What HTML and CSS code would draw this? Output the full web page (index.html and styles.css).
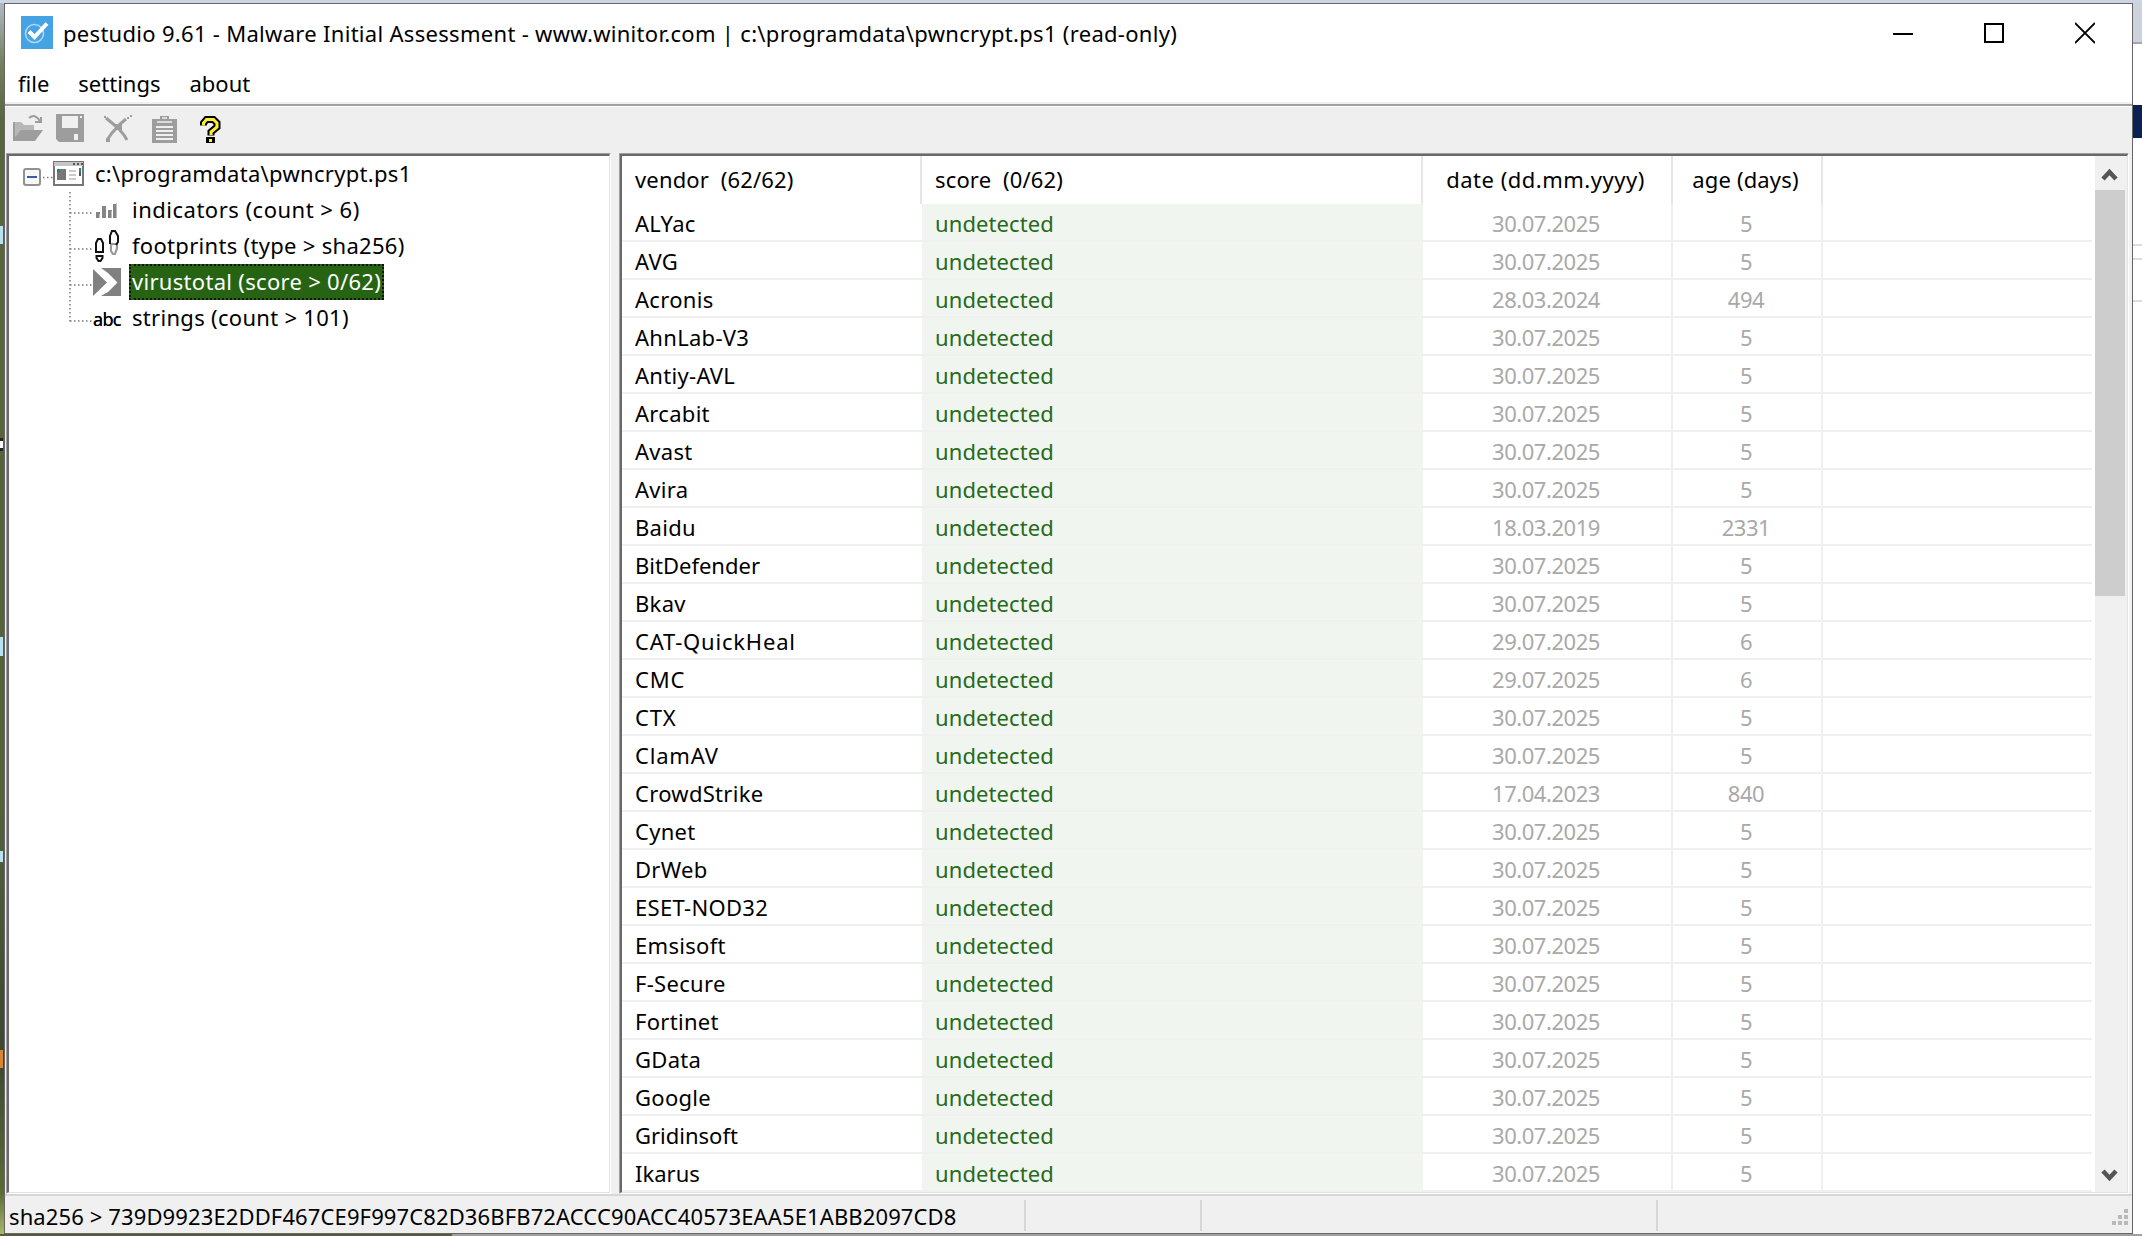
FILE: index.html
```
<!DOCTYPE html>
<html lang="en">
<head>
<meta charset="utf-8">
<title>pestudio</title>
<link rel="stylesheet" href="styles.css">
</head>
<body>
<div class="desk-left"><i class="m1"></i><i class="m2"></i><i class="m3"></i><i class="m4"></i><i class="m5"></i></div>
<main class="window">
  <header class="titlebar">
    <svg class="app-icon" width="32" height="33" viewBox="0 0 32 33"><path fill="#45a3e3" d="M0 0h32v33H0z"/><circle cx="13.500" cy="17.500" r="9" fill="none" stroke="#a9d6f3" stroke-width="1.600"/><path d="M8 15.500l5.500 5.500L26 7.500" fill="none" stroke="#fff" stroke-width="4"/></svg>
    <h1>pestudio 9.61 - Malware Initial Assessment - www.winitor.com | c:\programdata\pwncrypt.ps1 (read-only)</h1>
    <div class="controls">
      <svg width="20" height="22" viewBox="0 0 20 22"><path d="M0 12h20" stroke="#000" stroke-width="2"/></svg>
      <svg width="20" height="22" viewBox="0 0 20 22"><path d="M1 2h18v18H1z" fill="none" stroke="#000" stroke-width="2"/></svg>
      <svg width="20" height="22" viewBox="0 0 20 22"><path d="M0 1l20 20M20 1L0 21" stroke="#000" stroke-width="1.800"/></svg>
    </div>
  </header>
  <nav class="menu"><span>file</span><span>settings</span><span>about</span></nav>
  <div class="toolbar">
    <svg width="31" height="28" viewBox="0 0 31 28"><path d="M1 26V8h8l3 3h10v5H12L4 26z" fill="#b7b7b7"/><path d="M1 26L9 16h22l-8 11H1z" fill="#9d9d9d"/><path d="M1 8h2v18H1z" fill="#9d9d9d"/><path d="M17 4q6-5 11 3M29 3v5h-6" fill="none" stroke="#9d9d9d" stroke-width="2"/></svg>
    <svg width="28" height="28" viewBox="0 0 28 28"><path d="M0 0h28v28H3l-3-3z" fill="#9d9d9d"/><path d="M6 2h16v12H6zM18 20h4v6h-4z" fill="#f0f0f0"/><path d="M24 2h2v2h-2z" fill="#f0f0f0"/></svg>
    <svg width="28" height="28" viewBox="0 0 28 28"><path d="M2 3l6 5 7 6 5 6 3 5M22 4l-6 5-8 9-5 7" fill="none" stroke="#9d9d9d" stroke-width="3"/><path d="M2 23h4v4H2zM0 1h2v2H0zM23 2h2v2h-2zM26 0h2v2h-2zM11 9h7v6h-7z" fill="#9d9d9d"/></svg>
    <svg width="25" height="28" viewBox="0 0 25 28"><path d="M0 4h25v24H0z" fill="#9d9d9d"/><path d="M8 1h9v6H8z" fill="#9d9d9d"/><path d="M10 3h5M5 7h15" stroke="#f0f0f0" stroke-width="1.500"/><path d="M4 11h17v2H4zM4 15h17v2H4zM4 19h17v2H4zM4 23h17v2H4z" fill="#f0f0f0"/></svg>
    <svg width="21" height="28" viewBox="0 0 21 28"><path d="M3.500 9.500V7l3-3.500h7L17 7v4l-6 5v3.500" fill="none" stroke="#000" stroke-width="7"/><path d="M6 21h9v6H6z" fill="#000"/><path d="M3.500 9.500V7l3-3.500h7L17 7v4l-6 5v3" fill="none" stroke="#ffee2e" stroke-width="3"/><path d="M9 23h3v3H9z" fill="#ffee2e"/></svg>
  </div>
  <div class="panes">
    <section class="pane"><div class="pane-inner tree">
      <div class="node root">
        <svg width="76" height="36" viewBox="0 0 76 36"><rect x="15" y="13" width="16" height="16" rx="2" fill="#f7f7f7" stroke="#919191" stroke-width="2"/><path d="M18 21h10" stroke="#3c58a8" stroke-width="2"/><path d="M34 21.500h11" stroke="#777" stroke-width="1.500" stroke-dasharray="1.500 2.500"/><path d="M45 6h29v23H45z" fill="#fff" stroke="#777" stroke-width="2"/><path d="M45 6h29v4H45z" fill="#c4c4c4"/><path d="M64 7h2v2h-2zM68 7h2v2h-2zM72 7h2v2h-2z" fill="#555"/><path d="M48 13h9v11h-9z" fill="#777"/><path d="M48 13h3v3h-3zM70 12h2v4h-2z" fill="#168b8b"/><path d="M60 15h7M60 19h7M60 23h7" stroke="#bbb" stroke-width="1.500"/><path d="M70 16h2v4h-2z" fill="#555"/></svg>
        <span class="label">c:\programdata\pwncrypt.ps1</span>
      </div>
      <div class="node wide">
        <svg class="elbow" width="24" height="36"><path d="M1 0v36M1 21h22"/></svg>
        <svg width="29" height="36" viewBox="0 0 29 36"><path d="M3 20h4v6H3zM9 14h4v12H9zM15 18h4v8h-4zM20 12h4v14h-4z" fill="#858585"/><path d="M6 22h1v4H6zM18 19h1v7h-1zM23 11h1v15h-1z" fill="#bbb"/></svg>
        <span class="label">indicators (count &gt; 6)</span>
      </div>
      <div class="node">
        <svg class="elbow" width="24" height="36"><path d="M1 0v36M1 21h22"/></svg>
        <svg width="29" height="36" viewBox="0 0 29 36"><path d="M18 16h6v4l-2 6h-2l-2-3z" fill="none" stroke="#999" stroke-width="2.200"/><g fill="none" stroke="#111" stroke-width="2"><path d="M3 24V15l2-4h3l2 4v9zM3.500 28h6v2l-2 3h-2l-2-3z"/><path d="M17 16V8l2-5h3l3 5v6l-2 3"/></g></svg>
        <span class="label">footprints (type &gt; sha256)</span>
      </div>
      <div class="node">
        <svg class="elbow" width="24" height="36"><path d="M1 0v36M1 21h22"/></svg>
        <svg width="29" height="36" viewBox="0 0 29 36"><path d="M0 5l14 13.500L0 32zM8 4h20v28H8l7-4 9.500-9.500L15 9z" fill="#818181"/></svg>
        <span class="label selected">virustotal (score &gt; 0/62)</span>
      </div>
      <div class="node">
        <svg class="elbow" width="24" height="36"><path d="M1 0v22M1 21h22"/></svg>
        <span class="abc">abc</span>
        <span class="label">strings (count &gt; 101)</span>
      </div>
    </div></section>
    <section class="pane"><div class="pane-inner list">
      <table>
        <colgroup><col class="c-vendor"><col class="c-score"><col class="c-date"><col class="c-age"><col></colgroup>
        <thead><tr><th>vendor&nbsp; (62/62)</th><th>score&nbsp; (0/62)</th><th class="hd">date (dd.mm.yyyy)</th><th>age (days)</th><th></th></tr></thead>
        <tbody>
          <tr><td>ALYac</td><td>undetected</td><td>30.07.2025</td><td>5</td><td></td></tr>
          <tr><td>AVG</td><td>undetected</td><td>30.07.2025</td><td>5</td><td></td></tr>
          <tr><td>Acronis</td><td>undetected</td><td>28.03.2024</td><td>494</td><td></td></tr>
          <tr><td>AhnLab-V3</td><td>undetected</td><td>30.07.2025</td><td>5</td><td></td></tr>
          <tr><td>Antiy-AVL</td><td>undetected</td><td>30.07.2025</td><td>5</td><td></td></tr>
          <tr><td>Arcabit</td><td>undetected</td><td>30.07.2025</td><td>5</td><td></td></tr>
          <tr><td>Avast</td><td>undetected</td><td>30.07.2025</td><td>5</td><td></td></tr>
          <tr><td>Avira</td><td>undetected</td><td>30.07.2025</td><td>5</td><td></td></tr>
          <tr><td>Baidu</td><td>undetected</td><td>18.03.2019</td><td>2331</td><td></td></tr>
          <tr><td class="snug">BitDefender</td><td>undetected</td><td>30.07.2025</td><td>5</td><td></td></tr>
          <tr><td>Bkav</td><td>undetected</td><td>30.07.2025</td><td>5</td><td></td></tr>
          <tr><td class="caps">CAT-QuickHeal</td><td>undetected</td><td>29.07.2025</td><td>6</td><td></td></tr>
          <tr><td class="caps">CMC</td><td>undetected</td><td>29.07.2025</td><td>6</td><td></td></tr>
          <tr><td class="caps">CTX</td><td>undetected</td><td>30.07.2025</td><td>5</td><td></td></tr>
          <tr><td class="caps">ClamAV</td><td>undetected</td><td>30.07.2025</td><td>5</td><td></td></tr>
          <tr><td>CrowdStrike</td><td>undetected</td><td>17.04.2023</td><td>840</td><td></td></tr>
          <tr><td>Cynet</td><td>undetected</td><td>30.07.2025</td><td>5</td><td></td></tr>
          <tr><td>DrWeb</td><td>undetected</td><td>30.07.2025</td><td>5</td><td></td></tr>
          <tr><td>ESET-NOD32</td><td>undetected</td><td>30.07.2025</td><td>5</td><td></td></tr>
          <tr><td>Emsisoft</td><td>undetected</td><td>30.07.2025</td><td>5</td><td></td></tr>
          <tr><td>F-Secure</td><td>undetected</td><td>30.07.2025</td><td>5</td><td></td></tr>
          <tr><td>Fortinet</td><td>undetected</td><td>30.07.2025</td><td>5</td><td></td></tr>
          <tr><td>GData</td><td>undetected</td><td>30.07.2025</td><td>5</td><td></td></tr>
          <tr><td>Google</td><td>undetected</td><td>30.07.2025</td><td>5</td><td></td></tr>
          <tr><td class="snug">Gridinsoft</td><td>undetected</td><td>30.07.2025</td><td>5</td><td></td></tr>
          <tr><td class="snug">Ikarus</td><td>undetected</td><td>30.07.2025</td><td>5</td><td></td></tr>
        </tbody>
      </table>
      <div class="scrollbar">
        <svg width="30" height="34" viewBox="0 0 30 34"><path d="M8 23l6.500-7 6.500 7" fill="none" stroke="#555" stroke-width="4.500"/></svg>
        <div class="thumb"></div>
        <svg width="30" height="33" viewBox="0 0 30 33"><path d="M8 12l6.500 7 6.500-7" fill="none" stroke="#555" stroke-width="4.500"/></svg>
      </div>
    </div></section>
  </div>
  <footer class="status">
    <span class="s1">sha256 &gt; 739D9923E2DDF467CE9F997C82D36BFB72ACCC90ACC40573EAA5E1ABB2097CD8</span><span class="s2"></span><span class="s3"></span>
    <svg class="grip" width="16" height="16"><path d="M12 0h4v4h-4zM6 6h4v4H6zM12 6h4v4h-4zM0 12h4v4H0zM6 12h4v4H6zM12 12h4v4h-4z" fill="#b9b9b9"/></svg>
  </footer>
</main>
<div class="desk-right"><div class="d-title"></div><div class="d-white"></div><div class="d-navy"></div><div class="d-rows"></div><div class="d-rows r2"></div><div class="d-rows r3"></div></div>
</body>
</html>
```
FILE: styles.css
```
* { box-sizing: border-box; }
body {
  margin: 0; width: 2142px; height: 1236px; overflow: hidden;
  padding: 3px 0 2px;
  display: grid; grid-template-columns: 4px 2129px 9px;
  background: linear-gradient(#ccd5e3 0 3px, transparent 3px 1233px, #55603a 1233px) 0 0 / 452px 100% no-repeat,
              linear-gradient(#ccd5e3 0 3px, #a0a0a0 3px);
  font: 22px/36px "Noto Sans", sans-serif; color: #000;
}
svg { display: block; flex: none; }

/* desktop slivers beside the window */
.desk-left { background: linear-gradient(#aebac4, #73805c 60px, #5a6540 120px, #56613b 800px, #3d4630 1050px, #5c6a36 1190px, #a9b86a); }
.desk-left i { display: block; width: 3px; background: #b9e2f0; }
.desk-left .m1 { margin-top: 223px; height: 18px; }
.desk-left .m2 { margin-top: 194px; height: 13px; background: #fff; border: solid #222; border-width: 3px 0; }
.desk-left .m3 { margin-top: 186px; height: 19px; }
.desk-left .m4 { margin-top: 195px; height: 11px; }
.desk-left .m5 { margin-top: 188px; height: 18px; background: #d98432; }
.desk-right { display: flex; flex-direction: column; background: #fff; }
.d-title { height: 41px; background: #cdd2df; border-bottom: 2px solid #a3a7b0; }
.d-white { height: 61px; }
.d-navy { height: 33px; background: #0a2152; }
.d-rows { height: 108px; border-bottom: 2px solid #ddd; }
.r2 { height: 14px; }
.r3 { height: 42px; }

.window { height: 1231px; border: 1px solid #666; background: #f0f0f0; display: flex; flex-direction: column; }

.titlebar { height: 59px; background: #fff; display: flex; align-items: center; padding: 0 37px 2px 16px; }
.app-icon { margin-top: -1px; }
.titlebar h1 { margin: 0 0 0 10px; font-size: 22px; font-weight: 400; letter-spacing: 0.3px; white-space: pre; }
.controls { margin-left: auto; display: flex; gap: 71px; }
.menu { height: 39px; background: #fff; display: flex; align-items: center; gap: 29px; padding: 0 0 0 13px; letter-spacing: 0; }
.toolbar {
  height: 51px; display: flex; align-items: flex-start; padding: 12px 0 0 7px; background: #efefef;
  border-top: 2px solid #f0f0f0;
  box-shadow: inset 0 2px #a0a0a0, inset 0 3px #fff;
}
.toolbar svg:nth-child(1) { margin-right: 13px; margin-top: -2px; }
.toolbar svg:nth-child(2) { margin-right: 20px; margin-top: -2px; }
.toolbar svg:nth-child(3) { margin-right: 20px; margin-top: -1px; }
.toolbar svg:nth-child(4) { margin-right: 23px; margin-top: -1px; }

.panes { height: 1041px; display: grid; grid-template-columns: 605px 1510px; gap: 8px; padding-left: 1px; }
.pane { border: 1px solid #a0a0a0; border-right-color: #fff; border-bottom-color: #fff; }
.pane-inner { height: 100%; background: #fff; border: 2px solid #696969; border-right: 1px solid #e3e3e3; border-bottom: 1px solid #e3e3e3; }

.node { height: 36px; display: flex; padding-left: 60px; white-space: pre; letter-spacing: 0.300px; line-height: 35px; }
.node.root { padding-left: 0; letter-spacing: 0.300px; }
.node.wide { letter-spacing: 0.500px; }
.elbow path { fill: none; stroke: #777; stroke-width: 1.500; stroke-dasharray: 1.500 2.500; }
.label { margin-left: 7px; padding: 0 3px; }
.selected { background: #266414; color: #fff; outline: 2px dotted #111; outline-offset: -2px; }
.abc { width: 29px; font-size: 18px; letter-spacing: -0.700px; padding-top: 2px; text-shadow: 0 0 #000; }

.list { display: flex; }
table { width: 1471px; table-layout: fixed; border-collapse: separate; border-spacing: 0; margin-right: 3px; }
.c-vendor { width: 300px; }
.c-score { width: 501px; }
.c-date { width: 250px; }
.c-age { width: 150px; }
tr { height: 38px; }
th, td { padding: 3px 0 0 13px; text-align: left; white-space: pre; line-height: 33px; height: 38px; border-bottom: 2px solid #f0f0f0; }
th { height: 48px; padding-top: 0; padding-bottom: 2px; font-weight: 400; border-bottom: 0; border-right: 2px solid #e6e6e6; letter-spacing: 0.150px; }
th:last-child { border-right: 0; }
th:nth-child(n+3) { text-align: center; padding-left: 0; padding-right: 3px; }
.hd { letter-spacing: 0.500px; }
td:nth-child(1) { letter-spacing: 0.300px; }
td.snug { letter-spacing: 0; }
td.caps { letter-spacing: 0.800px; }
td:nth-child(2) { background: #f0f5ef; color: #266a1c; letter-spacing: 0.100px; }
td:nth-child(n+3) { color: #a9a9a9; text-align: center; padding-left: 0; padding-right: 2px; letter-spacing: -0.450px; border-right: 2px solid #f0f0f0; }
td:last-child { border-right: 0; }

.scrollbar { width: 32px; background: #f0f0f0; display: flex; flex-direction: column; }
.thumb { width: 30px; height: 406px; background: #cdcdcd; margin-bottom: auto; }

.status { height: 38px; display: flex; align-items: center; border-top: 2px solid #d7d7d7; padding-top: 2px; white-space: pre; }
.status span { height: 31px; line-height: 33px; border-right: 2px solid #d7d7d7; }
.s1 { width: 1021px; padding-left: 4px; letter-spacing: 0.120px; }
.s2 { width: 176px; }
.s3 { width: 456px; }
.grip { margin: 3px 4px 0 auto; }
```
